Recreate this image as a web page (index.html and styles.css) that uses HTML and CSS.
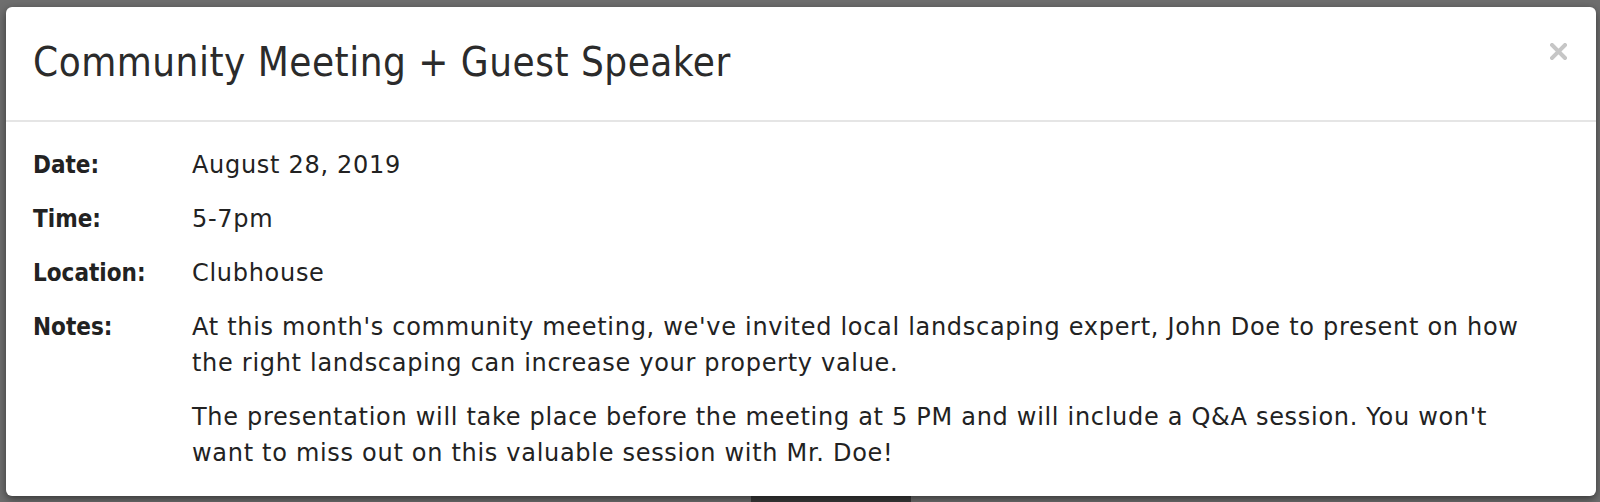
FILE: index.html
```html
<!DOCTYPE html>
<html lang="en">
<head>
    <meta charset="UTF-8">
    <meta name="viewport" content="width=device-width, initial-scale=1.0">
    <title>Community Meeting + Guest Speaker</title>
    <link rel="stylesheet" href="styles.css">
</head>
<body>
    <div class="backdrop-bit"></div>

    <div class="modal">
        <div class="modal-header">
            <h2 class="modal-title">Community Meeting + Guest Speaker</h2>
            <button class="close" aria-label="Close">
                <svg width="17" height="17" viewBox="0 0 17 17">
                    <path d="M2 2 L15 15 M15 2 L2 15" stroke="currentColor" stroke-width="4" stroke-linecap="square"/>
                </svg>
            </button>
        </div>
        <div class="modal-body">
            <div class="label">Date:</div>
            <div class="value">August 28, 2019</div>

            <div class="label">Time:</div>
            <div class="value">5-7pm</div>

            <div class="label">Location:</div>
            <div class="value">Clubhouse</div>

            <div class="label">Notes:</div>
            <div class="value">
                <p>At this month's community meeting, we've invited local landscaping expert, John Doe to present on how the right landscaping can increase your property value.</p>
                <p>The presentation will take place before the meeting at 5 PM and will include a Q&amp;A session. You won't want to miss out on this valuable session with Mr. Doe!</p>
            </div>
        </div>
    </div>
</body>
</html>
```

FILE: styles.css
```css
html, body {
    margin: 0;
    height: 100%;
    overflow: hidden;
}

body {
    font-family: "DejaVu Sans Condensed", "DejaVu Sans", sans-serif;
    background: #6e6e6e;
    color: #333;
    padding: 7px 4px 0 6px;
    box-sizing: border-box;
    position: relative;
}

/* bit of the page peeking out under the overlay */
.backdrop-bit {
    position: absolute;
    left: 751px;
    top: 496px;
    width: 160px;
    height: 6px;
    background: #3a3a3a;
}

.modal {
    position: relative;
    background: #fff;
    border-radius: 6px;
    height: 489px;
    box-shadow: 0 3px 9px rgba(0,0,0,0.5);
}

.modal-header {
    display: flex;
    justify-content: space-between;
    align-items: flex-start;
    padding: 31px 29px 34px 27px;
    border-bottom: 2px solid #e5e5e5;
}

.modal-title {
    margin: 0;
    font-size: 40px;
    font-weight: normal;
    line-height: 48px;
    letter-spacing: 0.5px;
    color: #2b2b2b;
}

.close {
    margin-top: 5px;
    padding: 0;
    border: none;
    background: none;
    color: #c6c6c6;
    line-height: 0;
    cursor: pointer;
}

.modal-body {
    display: grid;
    grid-template-columns: 159px 1fr;
    row-gap: 18px;
    padding: 25px 56px 0 27px;
    font-size: 24px;
    line-height: 36px;
    color: #222;
}

.label {
    font-weight: bold;
}

.value {
    font-family: "DejaVu Sans", sans-serif;
    letter-spacing: 0.7px;
}

.value p {
    margin: 0 0 18px;
}

.value p:last-child {
    margin-bottom: 0;
}
```
